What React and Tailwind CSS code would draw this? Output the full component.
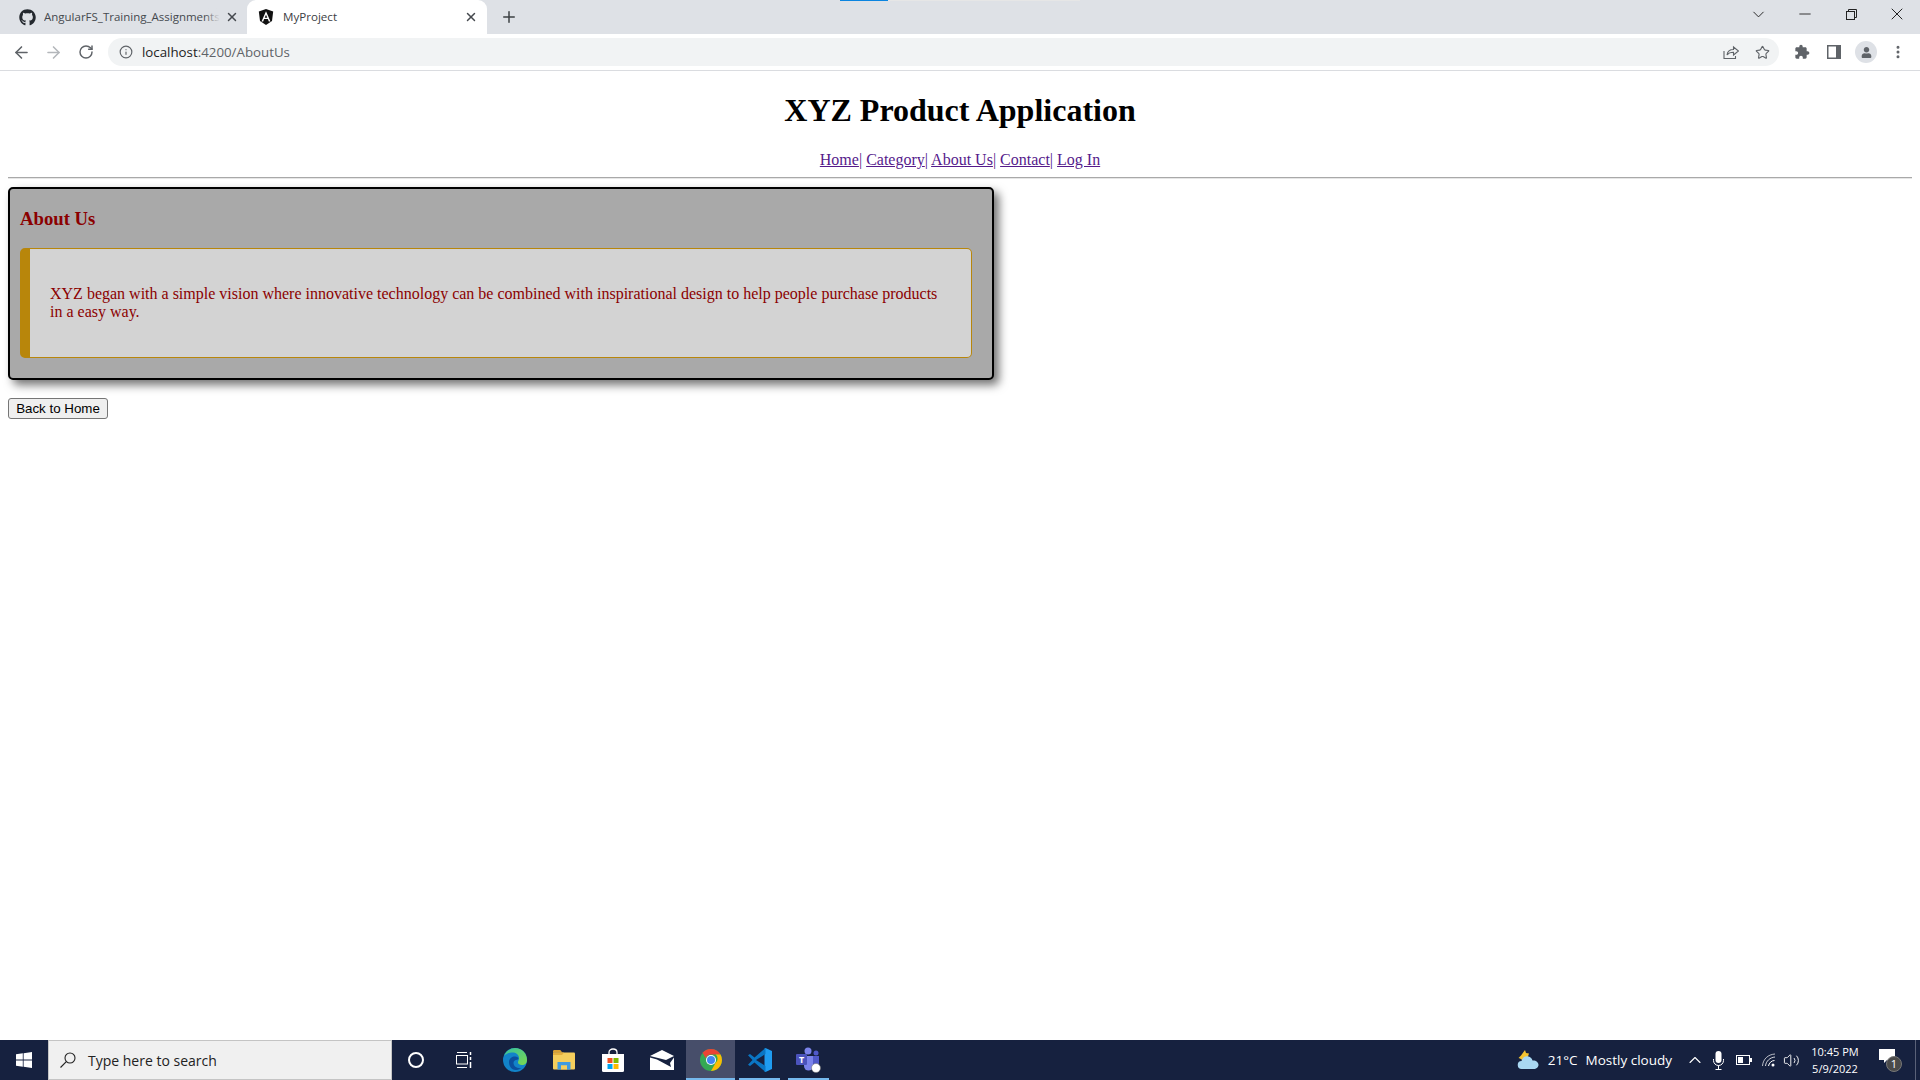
import { ArrowLeft, ArrowRight, RotateCw, Info, Plus, X, ChevronDown, Minus, Star, EllipsisVertical, ChevronUp, Volume2 } from 'lucide-react'
import { FaGithub, FaUser } from 'react-icons/fa'

const uiFont = "font-['Open_Sans','Noto_Sans',sans-serif]"

function AngularIcon() {
  return (
    <svg width="16" height="16" viewBox="0 0 16 16">
      <path d="M8 0 .8 2.500l1.200 9.400L8 16l6-4.100 1.200-9.400z" fill="#111" />
      <path d="M8 2.200 3.500 12.400h1.700l.9-2.300h3.800l.9 2.300h1.700zm0 3.600 1.300 3H6.700z" fill="#fff" fillRule="evenodd" />
    </svg>
  )
}

function RestoreIcon() {
  return (
    <svg width="11" height="11" viewBox="0 0 11 11" fill="none" stroke="#222" strokeWidth="1">
      <rect x="0.5" y="2.500" width="8" height="8" />
      <path d="M2.500 2.500v-2h8v8h-2" />
    </svg>
  )
}

function ShareIcon() {
  return (
    <svg width="16" height="16" viewBox="0 0 16 16" fill="none" stroke="#5f6368" strokeWidth="1.100">
      <path d="M1 7v7.500h11.500V12" />
      <path d="M4 11c.5-3.500 3-5.500 6.500-5.500V3l5 4-5 4V8.300C8 8.300 5.500 9 4 11z" />
    </svg>
  )
}

function ExtensionIcon() {
  return (
    <svg width="16" height="16" viewBox="0 0 24 24" fill="#5f6368">
      <path d="M20.500 11H19V7c0-1.100-.9-2-2-2h-4V3.500C13 2.120 11.880 1 10.500 1S8 2.120 8 3.500V5H4c-1.100 0-1.990.9-1.990 2v3.800H3.500c1.490 0 2.700 1.210 2.700 2.700s-1.210 2.700-2.700 2.700H2V20c0 1.100.9 2 2 2h3.800v-1.500c0-1.490 1.210-2.700 2.700-2.700 1.490 0 2.700 1.210 2.700 2.700V22H17c1.100 0 2-.9 2-2v-4h1.500c1.380 0 2.500-1.120 2.500-2.500S21.880 11 20.500 11z" />
    </svg>
  )
}

function SidePanelIcon() {
  return (
    <svg width="14" height="14" viewBox="0 0 14 14">
      <rect width="14" height="14" fill="#5f6368" />
      <rect x="1.500" y="1.500" width="7.500" height="11" fill="#fff" />
    </svg>
  )
}

function WindowsLogo() {
  return (
    <svg width="16" height="16" viewBox="0 0 16 16" fill="#fff">
      <path d="M0 2.300 6.800 1.300v6.300H0zM7.600 1.200 16 0v7.600H7.600zM0 8.400h6.800v6.300L0 13.700zM7.600 8.400H16V16l-8.400-1.200z" />
    </svg>
  )
}

function SearchIcon() {
  return (
    <svg width="16" height="16" viewBox="0 0 16 16" fill="none" stroke="#222" strokeWidth="1.100">
      <circle cx="10" cy="6" r="5" />
      <path d="M6.300 9.700.5 15.500" />
    </svg>
  )
}

function TaskViewIcon() {
  return (
    <svg width="16" height="16" viewBox="0 0 16 16" fill="none" stroke="#fff" strokeWidth="1">
      <path d="M1 .5h10M1 15.500h10" />
      <rect x="0.500" y="3.500" width="11" height="8.500" />
      <path d="M14.500 0v3M14.500 5v3M14.500 10v6" strokeWidth="1.500" />
    </svg>
  )
}

function EdgeLogo() {
  return (
    <svg width="24" height="24" viewBox="0 0 24 24">
      <defs>
        <linearGradient id="edge-a" x1="0" y1="0" x2="1" y2="1">
          <stop offset="0" stopColor="#35c1a0" />
          <stop offset="1" stopColor="#7bd94e" />
        </linearGradient>
      </defs>
      <circle cx="12" cy="12" r="12" fill="#1283c9" />
      <path d="M1 8C3 2.500 8 0 12 0c7 0 12 5 12 12 0 3-2 5-5 5-2.500 0-4-1-4-2.500 0-2 1-2 1-4.500C16 6 12 4 8.500 4.500 5 5 2 6.500 1 8z" fill="url(#edge-a)" />
      <path d="M6 14c0-3.500 3-5.500 6-5.500 2 0 3.500 1 3.500 2 0 2-5 .5-5 4.500 0 3.500 4 6 8 5-2 1.500-4 2-6 2-4 0-6.500-4-6.500-8z" fill="#0b4f9e" />
    </svg>
  )
}

function FolderLogo() {
  return (
    <svg width="22" height="20" viewBox="0 0 22 20">
      <path d="M0 1.500C0 .700.500 0 1.300 0h6l2 2.500H0z" fill="#d9a033" />
      <rect x="0" y="2.500" width="22" height="17" rx="1" fill="#f5ce5c" />
      <path d="M0 5h9l2-2.500H0z" fill="#e4ae3c" />
      <path d="M4.500 19.500V12h13v7.500h-3.500v-4H8v4z" fill="#3f9be0" />
      <rect x="8" y="15.500" width="6" height="4" fill="#f5ce5c" />
    </svg>
  )
}

function StoreLogo() {
  return (
    <svg width="24" height="24" viewBox="0 0 24 24">
      <path d="M8 7V4.500C8 2.500 9.700 1 12 1s4 1.500 4 3.500V7" fill="none" stroke="#fff" strokeWidth="1.300" />
      <path d="M1 6h22v16.500a1.500 1.500 0 0 1-1.500 1.500h-19A1.500 1.500 0 0 1 1 22.500z" fill="#fff" />
      <rect x="6.500" y="10" width="5" height="5" fill="#f25022" />
      <rect x="12.500" y="10" width="5" height="5" fill="#7fba00" />
      <rect x="6.500" y="16" width="5" height="5" fill="#00a4ef" />
      <rect x="12.500" y="16" width="5" height="5" fill="#ffb900" />
    </svg>
  )
}

function MailLogo() {
  return (
    <svg width="24" height="20" viewBox="0 0 24 20">
      <path d="M0 6 12 0l12 6-8 4L0 6z" fill="#fff" />
      <path d="M0 7.500V20h24V7.500L20 13l1 4L7 9.500z" fill="#fff" />
    </svg>
  )
}

function ChromeLogo() {
  return (
    <svg width="22" height="22" viewBox="0 0 22 22">
      <circle cx="11" cy="11" r="11" fill="#34a853" />
      <path d="M11 0a11 11 0 0 1 9.500 5.500H11a5.500 5.500 0 0 0-5.200 3.700L2.500 3.800A11 11 0 0 1 11 0z" fill="#ea4335" />
      <path d="M20.500 5.500A11 11 0 0 1 11 22l4.700-8.200a5.500 5.500 0 0 0 0-8.300z" fill="#fbbc04" />
      <circle cx="11" cy="11" r="5" fill="#fff" />
      <circle cx="11" cy="11" r="4" fill="#4285f4" />
    </svg>
  )
}

function VsCodeLogo() {
  return (
    <svg width="24" height="24" viewBox="0 0 24 24">
      <path d="M17.500 0 24 3v18l-6.500 3-1-.5V.5z" fill="#1f9cf0" />
      <path d="M17.500 0v6L8 12l9.500 6v6L6.500 14.500 2 18 0 16.800 4.500 12 0 7.200 2 6l4.500 3.500z" fill="#0a76c4" />
    </svg>
  )
}

function TeamsLogo() {
  return (
    <svg width="26" height="26" viewBox="0 0 26 26">
      <circle cx="12" cy="4" r="3.500" fill="#7b83eb" />
      <circle cx="20" cy="6" r="2.500" fill="#5059c9" />
      <path d="M8 9h9v10a4.500 4.500 0 0 1-9 0z" fill="#7b83eb" />
      <path d="M17 9h6v7a3 3 0 0 1-6 0z" fill="#5059c9" />
      <rect x="0" y="7" width="11" height="11" rx="1" fill="#4b53bc" />
      <text x="5.500" y="16" textAnchor="middle" fontSize="9" fontWeight="700" fontFamily="Open Sans, sans-serif" fill="#fff">T</text>
      <circle cx="20" cy="21" r="4.500" fill="#fff" stroke="#666" strokeWidth="0.500" />
    </svg>
  )
}

function CloudIcon() {
  return (
    <svg width="22" height="20" viewBox="0 0 22 20">
      <path d="M8 0l1 3 3 .5-1 3-5 4-3-2-1.500-.5L4 5.500z" fill="#f4c430" />
      <path d="M5 19a4 4 0 0 1-.5-8C5.500 7.500 8.500 5.500 11.500 6.500c2 .5 3.500 2 4 4 3-.5 6 1.500 6 4.300S19 19 17 19z" fill="#a9d8f2" />
    </svg>
  )
}

function MicIcon() {
  return (
    <svg width="11" height="19" viewBox="0 0 11 19" fill="none" stroke="#fff" strokeWidth="1">
      <rect x="2.500" y="0" width="6" height="12" rx="3" fill="#fff" stroke="none" />
      <path d="M.5 8v1.500a5 5 0 0 0 10 0V8M5.500 14.500v3.500M2.500 18.500h6" />
    </svg>
  )
}

function BatteryIcon() {
  return (
    <svg width="16" height="10" viewBox="0 0 16 10">
      <rect x="0.500" y="0.500" width="13" height="9" fill="none" stroke="#fff" />
      <rect x="2" y="2" width="5" height="6" fill="#fff" />
      <rect x="14" y="3" width="2" height="4" fill="#fff" />
    </svg>
  )
}

function WifiIcon() {
  return (
    <svg width="14" height="14" viewBox="0 0 14 14" fill="none" stroke="#fff" strokeWidth="1">
      <path d="M0.500 13C1 6 6 1.500 13 1" opacity="0.700" />
      <path d="M3.500 13C4 8 8 4.500 13 4" opacity="0.800" />
      <path d="M6.500 13C7 10 9.500 7.500 12.500 7.500" />
      <circle cx="11" cy="12" r="1.500" fill="#fff" stroke="none" />
    </svg>
  )
}

function TaskbarApp({ active, open, children }) {
  return (
    <div className={`relative w-[49px] h-full flex items-center justify-center ${active ? 'bg-[#474e6a]' : ''}`}>
      {children}
      {open && <div className={`absolute bottom-0 h-[2px] bg-[#76b9ed] ${active ? 'left-0 right-0' : 'left-1 right-1'}`} />}
    </div>
  )
}

function BrowserChrome() {
  return (
    <div className={`shrink-0 ${uiFont}`}>
      <div className="relative h-[34px] bg-[#dee1e6] flex items-end pl-[8px]">
        {/* screen capture bar at the very top */}
        <div className="absolute top-0 left-[840px] w-[240px] h-[1px] bg-[#e6e6e6]" />
        <div className="absolute top-0 left-[840px] w-[48px] h-[1px] bg-[#0a84e0]" />
        <div className="w-[239px] h-[34px] flex items-center pl-[11px] pr-[8px]">
          <FaGithub size={17} className="text-[#24292f] shrink-0" />
          <span className="relative ml-[8px] w-[176px] overflow-hidden whitespace-nowrap text-[11.500px] text-[#45494e]">
            AngularFS_Training_Assignments
            <span className="absolute top-0 right-0 bottom-0 w-[16px] bg-gradient-to-r from-transparent to-[#dee1e6]" />
          </span>
          <X size={14} strokeWidth={2.500} className="ml-auto text-[#45494e]" />
        </div>
        <div className="w-[240px] h-[34px] bg-white rounded-t-[9px] flex items-center pl-[11px] pr-[9px]">
          <AngularIcon />
          <span className="ml-[9px] text-[11.600px] text-[#3c4043]">MyProject</span>
          <X size={14} strokeWidth={2.500} className="ml-auto text-[#45494e]" />
        </div>
        <div className="h-[34px] flex items-center ml-[13px]">
          <Plus size={18} strokeWidth={2} className="text-[#3c4043]" />
        </div>
        <div className="ml-auto h-[28px] self-start flex items-center text-[#222]">
          <ChevronDown size={19} strokeWidth={1.200} />
          <Minus size={18} strokeWidth={1.200} className="ml-[28px]" />
          <div className="ml-[32px]"><RestoreIcon /></div>
          <X size={20} strokeWidth={1.200} className="ml-[30px] mr-[13px]" />
        </div>
      </div>
      <div className="h-[37px] bg-white border-b border-[#dadce0] flex items-center pl-[12px] pr-[14px]">
        <ArrowLeft size={19} className="text-[#5f6368]" />
        <ArrowRight size={19} className="ml-[13px] text-[#b4b7bb]" />
        <RotateCw size={16} strokeWidth={2.200} className="ml-[15px] text-[#5f6368]" />
        <div className="ml-[14px] flex-1 h-[28px] rounded-full bg-[#f1f3f4] flex items-center pl-[11px] pr-[9px]">
          <Info size={14} className="text-[#5f6368]" />
          <span className="ml-[9px] pt-[1px] text-[13.300px] text-[#222]">localhost<span className="text-[#5f6368]">:4200/AboutUs</span></span>
          <div className="ml-auto flex items-center gap-[16px]">
            <ShareIcon />
            <Star size={15} strokeWidth={1.800} className="text-[#5f6368]" />
          </div>
        </div>
        <div className="ml-[15px]"><ExtensionIcon /></div>
        <div className="ml-[17px]"><SidePanelIcon /></div>
        <div className="ml-[14px] w-[22px] h-[22px] rounded-full bg-[#dee1e6] flex items-center justify-center">
          <FaUser size={11} className="text-[#5f6368]" />
        </div>
        <EllipsisVertical size={16} strokeWidth={2.500} className="ml-[13px] text-[#5f6368]" />
      </div>
    </div>
  )
}

function Page() {
  const links = ['Home', 'Category', 'About Us', 'Contact', 'Log In']
  return (
    <div className="flex-1 bg-white px-[8px] font-['Liberation_Serif',serif] text-black">
      <h1 className="mt-[21px] mb-[22px] text-[32px] leading-[37px] font-bold text-center">XYZ Product Application</h1>
      <div className="text-center text-[16px] leading-[18px]">
        {links.map((l, i) => (
          <span key={l}>
            <a href="#" className="underline text-[#551a8b]">{l}</a>
            {i < links.length - 1 && <span className="text-[#551a8b]">| </span>}
          </span>
        ))}
      </div>
      <hr className="mt-[8px] mb-[8px] border-t border-b border-t-[#a9a9a9] border-b-[#e6e6e6]" />
      <div className="w-[986px] border-2 border-black rounded-[5px] bg-[#a9a9a9] px-[10px] pb-[20px] pt-[19px] shadow-[5px_5px_10px_rgba(0,0,0,0.55)]">
        <h3 className="mb-[19px] text-[18.720px] leading-[21px] font-bold text-[#8b0000]">About Us</h3>
        <div className="w-[952px] border border-[#b8860b] border-l-[10px] rounded-[5px] bg-[#d3d3d3] px-[20px] py-[20px]">
          <p className="my-[16px] text-[16px] leading-[18px] text-[#8b0000]">
            XYZ began with a simple vision where innovative technology can be combined with inspirational design to help people purchase products in a easy way.
          </p>
        </div>
      </div>
      <button className="mt-[18px] h-[21px] w-[100px] border border-[#767676] rounded-[3px] bg-[#efefef] text-[13.333px] leading-none text-black font-['Liberation_Sans',sans-serif]">Back to Home</button>
    </div>
  )
}

function Taskbar() {
  return (
    <div className={`shrink-0 h-[40px] bg-[#16213f] flex items-center text-white ${uiFont}`}>
      <div className="w-[48px] flex justify-center"><WindowsLogo /></div>
      <div className="w-[344px] h-full bg-[#f0f0f0] border border-[#c4c4c4] flex items-center pl-[11px]">
        <SearchIcon />
        <span className="ml-[12px] text-[14px] text-[#222]">Type here to search</span>
      </div>
      <div className="w-[48px] flex justify-center">
        <div className="w-[16px] h-[16px] rounded-full border-2 border-white" />
      </div>
      <div className="w-[48px] flex justify-center"><TaskViewIcon /></div>
      <div className="h-full flex ml-[2px]">
        <TaskbarApp><EdgeLogo /></TaskbarApp>
        <TaskbarApp><FolderLogo /></TaskbarApp>
        <TaskbarApp><StoreLogo /></TaskbarApp>
        <TaskbarApp><MailLogo /></TaskbarApp>
        <TaskbarApp active open><ChromeLogo /></TaskbarApp>
        <TaskbarApp open><VsCodeLogo /></TaskbarApp>
        <TaskbarApp open><TeamsLogo /></TaskbarApp>
      </div>
      <div className="ml-auto h-full flex items-center">
        <CloudIcon />
        <span className="ml-[9px] text-[13.500px]">21°C</span>
        <span className="ml-[8px] text-[13.500px]">Mostly cloudy</span>
        <ChevronUp size={20} strokeWidth={1.300} className="ml-[13px]" />
        <div className="ml-[8px]"><MicIcon /></div>
        <div className="ml-[12px]"><BatteryIcon /></div>
        <div className="ml-[10px]"><WifiIcon /></div>
        <Volume2 size={17} strokeWidth={1.300} className="ml-[7px]" />
        <div className="ml-[5px] w-[60px] text-center text-[11px] leading-[17px]">
          <div>10:45 PM</div>
          <div>5/9/2022</div>
        </div>
        <div className="relative ml-[14px] w-[24px] h-[24px] mr-[12px]">
          <svg width="16" height="14" viewBox="0 0 16 14" fill="#fff" className="absolute left-0 top-[1px]">
            <path d="M0 0h16v11H8l-3 3v-3H0z" />
          </svg>
          <div className="absolute left-[7px] top-[8px] w-[16px] h-[16px] rounded-full bg-[#4a4a4a] border border-[#777] text-[11px] leading-[14px] text-center">1</div>
        </div>
        <div className="w-px h-full bg-[#5a6178] mr-[4px]" />
      </div>
    </div>
  )
}

export default function App() {
  return (
    <div className="w-[1920px] h-[1080px] overflow-hidden flex flex-col">
      <BrowserChrome />
      <Page />
      <Taskbar />
    </div>
  )
}
